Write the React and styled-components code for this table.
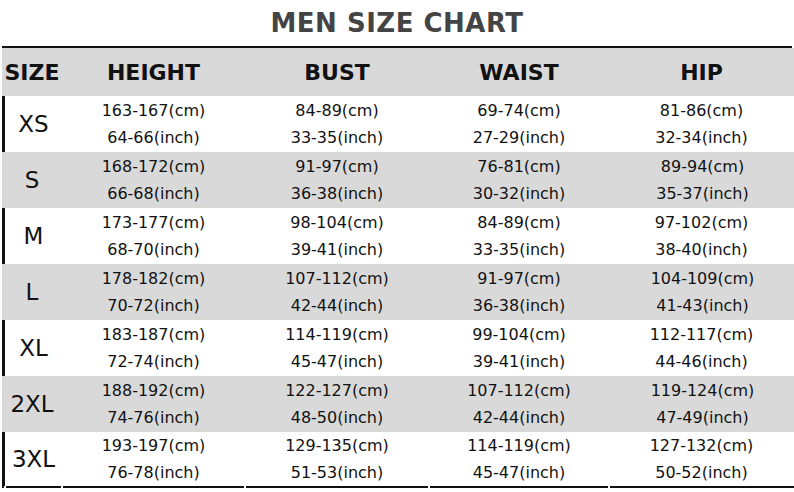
import React from "react";
import styled, { createGlobalStyle } from "styled-components";

const Global = createGlobalStyle`
  html, body { margin: 0; padding: 0; background: #fff; }
  body { font-family: "DejaVu Sans", "Open Sans", sans-serif; color: #111; }
`;

const Page = styled.div`
  width: 794px;
  height: 492px;
  overflow: hidden;
  display: flex;
  flex-direction: column;
`;

const Title = styled.h1`
  margin: 0;
  height: 46px;
  display: flex;
  align-items: center;
  justify-content: center;
  font-size: 26px;
  font-weight: bold;
  color: #444;
  letter-spacing: 0.5px;
`;

const Table = styled.div`
  display: grid;
  grid-template-columns: 60px 183px 184px 180px 187px;
  grid-auto-rows: 56px;
  grid-template-rows: 48px;
  border-top: 2px solid #111;
  margin: 0 2px;
`;

const Cell = styled.div`
  background: ${(p) => (p.$shaded ? "#d9d9d9" : "#fff")};
  display: flex;
  flex-direction: column;
  justify-content: center;
  align-items: center;
  box-sizing: border-box;
  border-left: ${(p) => (p.$edgeLeft ? "3px solid #111" : "none")};
  border-right: ${(p) => (p.$edgeRight ? "2px solid #111" : "none")};
  border-bottom: ${(p) => (p.$last ? "2px solid #111" : "none")};
  position: relative;
  &::after {
    content: "";
    position: absolute;
    left: -1px;
    bottom: -2px;
    width: 2px;
    height: 2px;
    background: ${(p) => (p.$last ? "#fff" : "transparent")};
  }
`;

const HeadText = styled.span`
  font-size: 22px;
  font-weight: bold;
  color: #111;
`;

const SizeText = styled.span`
  font-size: 23px;
  color: #111;
`;

const Value = styled.span`
  font-size: 16px;
  line-height: 27px;
  color: #111;
  white-space: nowrap;
`;

const headers = ["SIZE", "HEIGHT", "BUST", "WAIST", "HIP"];

const rows = [
  ["XS", ["163-167", "64-66"], ["84-89", "33-35"], ["69-74", "27-29"], ["81-86", "32-34"]],
  ["S", ["168-172", "66-68"], ["91-97", "36-38"], ["76-81", "30-32"], ["89-94", "35-37"]],
  ["M", ["173-177", "68-70"], ["98-104", "39-41"], ["84-89", "33-35"], ["97-102", "38-40"]],
  ["L", ["178-182", "70-72"], ["107-112", "42-44"], ["91-97", "36-38"], ["104-109", "41-43"]],
  ["XL", ["183-187", "72-74"], ["114-119", "45-47"], ["99-104", "39-41"], ["112-117", "44-46"]],
  ["2XL", ["188-192", "74-76"], ["122-127", "48-50"], ["107-112", "42-44"], ["119-124", "47-49"]],
  ["3XL", ["193-197", "76-78"], ["129-135", "51-53"], ["114-119", "45-47"], ["127-132", "50-52"]],
];

export default function App() {
  return (
    <Page>
      <Global />
      <Title>MEN SIZE CHART</Title>
      <Table>
        {headers.map((h, i) => (
          <Cell key={h} $shaded $edgeRight={i === 4}>
            <HeadText>{h}</HeadText>
          </Cell>
        ))}
        {rows.map((r, ri) => {
          const shaded = ri % 2 === 1;
          const last = ri === rows.length - 1;
          return (
            <React.Fragment key={r[0]}>
              <Cell $shaded={shaded} $edgeLeft={!shaded} $last={last}>
                <SizeText>{r[0]}</SizeText>
              </Cell>
              {r.slice(1).map((v, ci) => (
                <Cell key={ci} $shaded={shaded} $edgeRight={ci === 3 && !shaded} $last={last}>
                  <Value>{v[0]}(cm)</Value>
                  <Value>{v[1]}(inch)</Value>
                </Cell>
              ))}
            </React.Fragment>
          );
        })}
      </Table>
    </Page>
  );
}
